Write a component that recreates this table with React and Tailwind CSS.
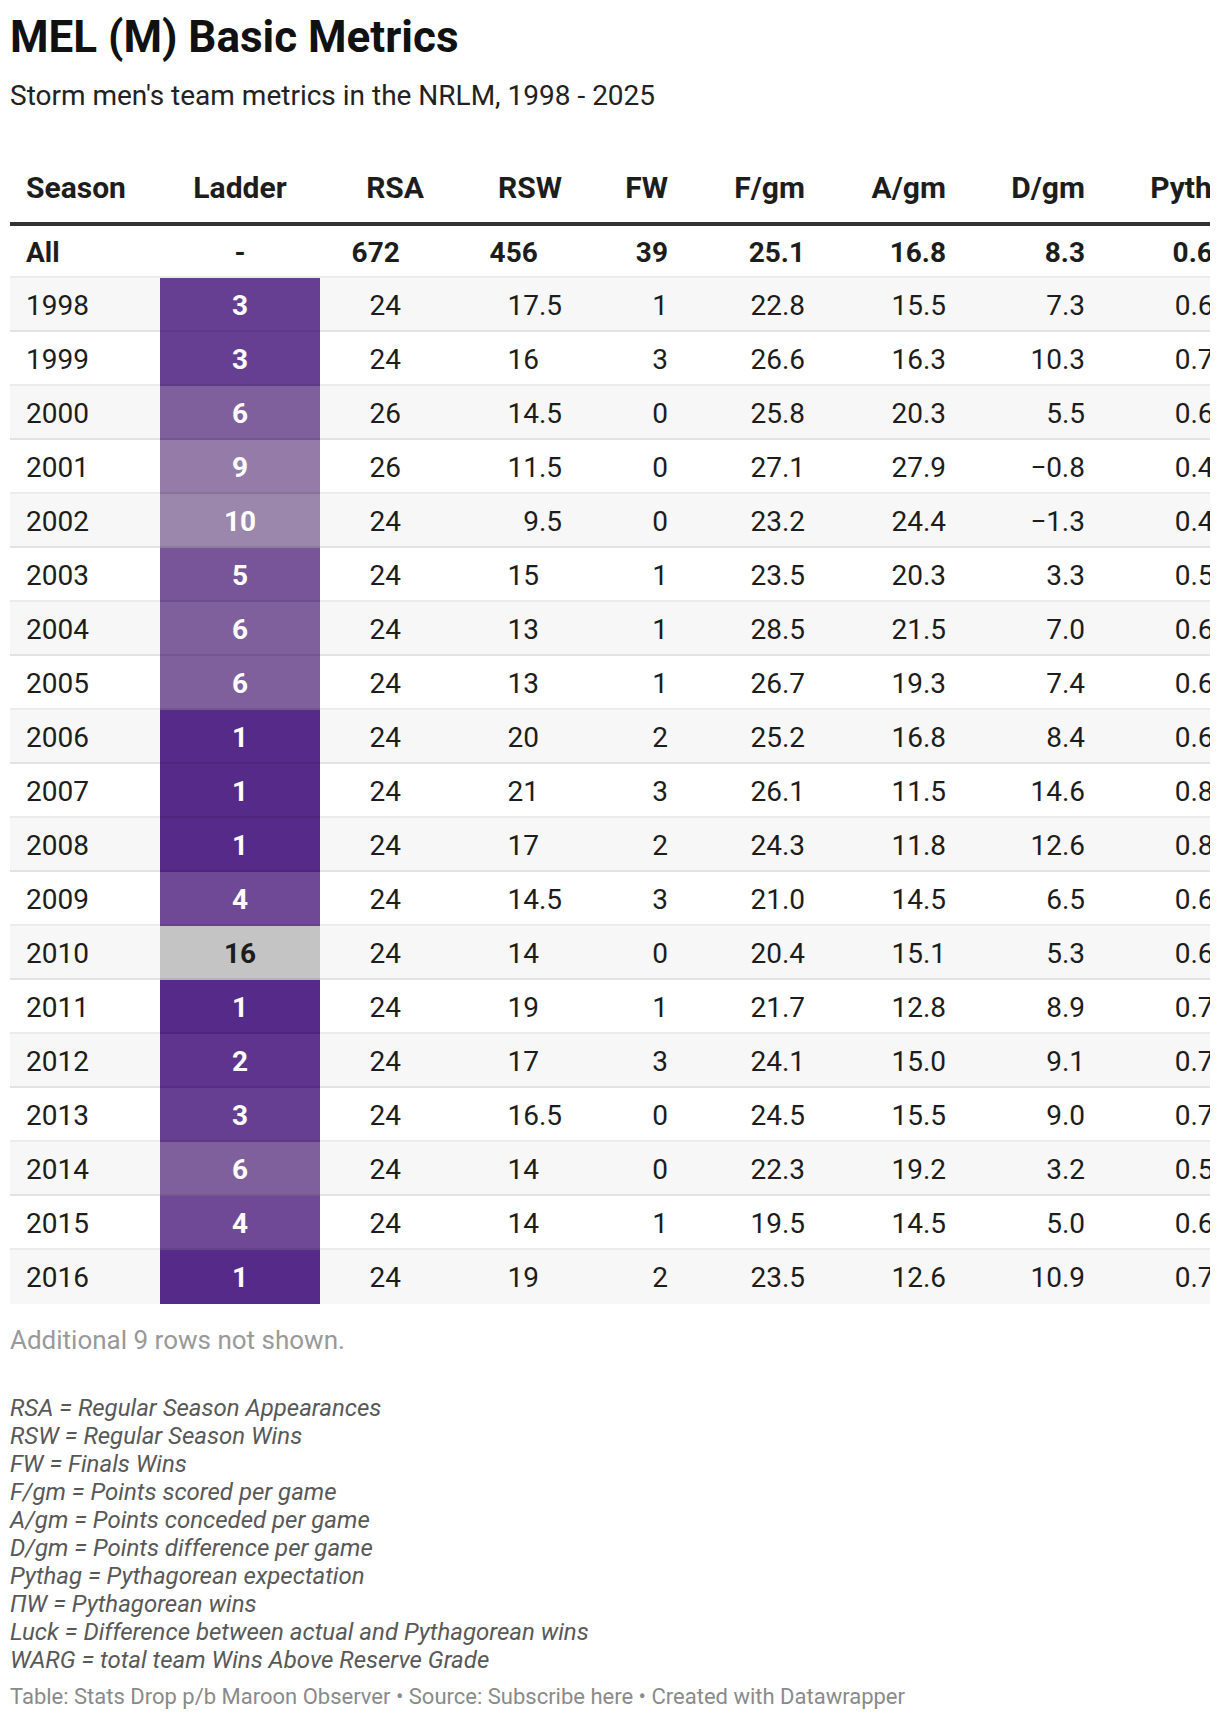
const rows = [
  ["1998", 3, "24", "17.5", "1", "22.8", "15.5", "7.3", "0.684"],
  ["1999", 3, "24", "16", "3", "26.6", "16.3", "10.3", "0.727"],
  ["2000", 6, "26", "14.5", "0", "25.8", "20.3", "5.5", "0.618"],
  ["2001", 9, "26", "11.5", "0", "27.1", "27.9", "−0.8", "0.485"],
  ["2002", 10, "24", "9.5", "0", "23.2", "24.4", "−1.3", "0.475"],
  ["2003", 5, "24", "15", "1", "23.5", "20.3", "3.3", "0.573"],
  ["2004", 6, "24", "13", "1", "28.5", "21.5", "7.0", "0.637"],
  ["2005", 6, "24", "13", "1", "26.7", "19.3", "7.4", "0.657"],
  ["2006", 1, "24", "20", "2", "25.2", "16.8", "8.4", "0.692"],
  ["2007", 1, "24", "21", "3", "26.1", "11.5", "14.6", "0.837"],
  ["2008", 1, "24", "17", "2", "24.3", "11.8", "12.6", "0.809"],
  ["2009", 4, "24", "14.5", "3", "21.0", "14.5", "6.5", "0.677"],
  ["2010", 16, "24", "14", "0", "20.4", "15.1", "5.3", "0.646"],
  ["2011", 1, "24", "19", "1", "21.7", "12.8", "8.9", "0.742"],
  ["2012", 2, "24", "17", "3", "24.1", "15.0", "9.1", "0.721"],
  ["2013", 3, "24", "16.5", "0", "24.5", "15.5", "9.0", "0.714"],
  ["2014", 6, "24", "14", "0", "22.3", "19.2", "3.2", "0.574"],
  ["2015", 4, "24", "14", "1", "19.5", "14.5", "5.0", "0.644"],
  ["2016", 1, "24", "19", "2", "23.5", "12.6", "10.9", "0.777"],
];

const ladderColors = {
  1: "bg-[#562a89] text-white",
  2: "bg-[#5e348f] text-white",
  3: "bg-[#673f92] text-white",
  4: "bg-[#6f4995] text-white",
  5: "bg-[#785499] text-white",
  6: "bg-[#7f5f9c] text-white",
  9: "bg-[#957ca8] text-white",
  10: "bg-[#9b87ab] text-white",
  16: "bg-[#c4c4c4] text-[#1d1d1d]",
};

const notes = [
  "RSA = Regular Season Appearances",
  "RSW = Regular Season Wins",
  "FW = Finals Wins",
  "F/gm = Points scored per game",
  "A/gm = Points conceded per game",
  "D/gm = Points difference per game",
  "Pythag = Pythagorean expectation",
  "ΠW = Pythagorean wins",
  "Luck = Difference between actual and Pythagorean wins",
  "WARG = total team Wins Above Reserve Grade",
];

const grid =
  "grid grid-cols-[150px_160px_119px_138px_106px_137px_141px_139px_160px] w-[1250px]";

// integers get an invisible ".5" so they line up on the decimal point
function Dec({ v }) {
  if (v.includes(".")) return <span>{v}</span>;
  return (
    <span>
      {v}
      <span className="invisible">.5</span>
    </span>
  );
}

function Cell({ children, last, className = "" }) {
  return (
    <div
      className={`flex items-center pt-[4px] ${
        last ? "border-b-2 border-transparent" : "border-b-2 border-black/[0.08]"
      } ${className}`}
    >
      {children}
    </div>
  );
}

function Row({ r, striped, last }) {
  const [season, ladder, rsa, rsw, fw, f, a, d, py] = r;
  return (
    <div className={`${grid} h-[54px] ${striped ? "bg-[#f7f7f7]" : "bg-white"}`}>
      <Cell last={last} className="pl-[16px]">{season}</Cell>
      <Cell last={last} className={`justify-center font-bold ${ladderColors[ladder]}`}>
        {ladder}
      </Cell>
      <Cell last={last} className="justify-end pr-[15px]">
        <Dec v={rsa} />
      </Cell>
      <Cell last={last} className="justify-end pr-[15px]">
        <Dec v={rsw} />
      </Cell>
      <Cell last={last} className="justify-end pr-[15px]">{fw}</Cell>
      <Cell last={last} className="justify-end pr-[15px]">{f}</Cell>
      <Cell last={last} className="justify-end pr-[15px]">{a}</Cell>
      <Cell last={last} className="justify-end pr-[15px]">{d}</Cell>
      <Cell last={last} className="justify-end pr-[15px]">{py}</Cell>
    </div>
  );
}

export default function App() {
  const headers = ["Season", "Ladder", "RSA", "RSW", "FW", "F/gm", "A/gm", "D/gm", "Pythag"];

  return (
    <div className="w-[1220px] min-h-[1720px] bg-white px-[10px] pt-[11px] font-[Roboto,sans-serif] text-[#1d1d1d]">
      <h1 className="text-[44px] leading-[52px] font-bold text-[#111]">MEL (M) Basic Metrics</h1>
      <p className="mt-[15px] text-[28px] leading-[36px] text-[#222]">
        Storm men's team metrics in the NRLM, 1998 - 2025
      </p>

      <div className="mt-[56px] w-[1200px] overflow-hidden text-[28px] leading-[34px]">
        <div className={`${grid} border-b-4 border-[#333]`}>
          {headers.map((h, i) => (
            <div
              key={h}
              className={`pb-[16px] text-[30px] leading-[36px] font-bold ${
                i === 0 ? "pl-[16px] text-left" : i === 1 ? "text-center" : "pr-[15px] text-right"
              }`}
            >
              {h}
            </div>
          ))}
        </div>

        <div className={`${grid} h-[52px] bg-white font-bold`}>
          <Cell className="pl-[16px]">All</Cell>
          <Cell className="justify-center">-</Cell>
          <Cell className="justify-end pr-[15px]">
            <Dec v="672" />
          </Cell>
          <Cell className="justify-end pr-[15px]">
            <Dec v="456" />
          </Cell>
          <Cell className="justify-end pr-[15px]">39</Cell>
          <Cell className="justify-end pr-[15px]">25.1</Cell>
          <Cell className="justify-end pr-[15px]">16.8</Cell>
          <Cell className="justify-end pr-[15px]">8.3</Cell>
          <Cell className="justify-end pr-[15px]">0.691</Cell>
        </div>

        {rows.map((r, i) => (
          <Row key={r[0]} r={r} striped={i % 2 === 0} last={i === rows.length - 1} />
        ))}
      </div>

      <p className="mt-[20px] text-[26px] leading-[32px] text-[#999]">Additional 9 rows not shown.</p>

      <div className="mt-[38px] text-[24px] leading-[28px] italic text-[#585858]">
        {notes.map((n) => (
          <div key={n}>{n}</div>
        ))}
      </div>

      <p className="mt-[9px] text-[22px] leading-[28px] text-[#8a8a8a]">
        Table: Stats Drop p/b Maroon Observer • Source: Subscribe here • Created with Datawrapper
      </p>
    </div>
  );
}
